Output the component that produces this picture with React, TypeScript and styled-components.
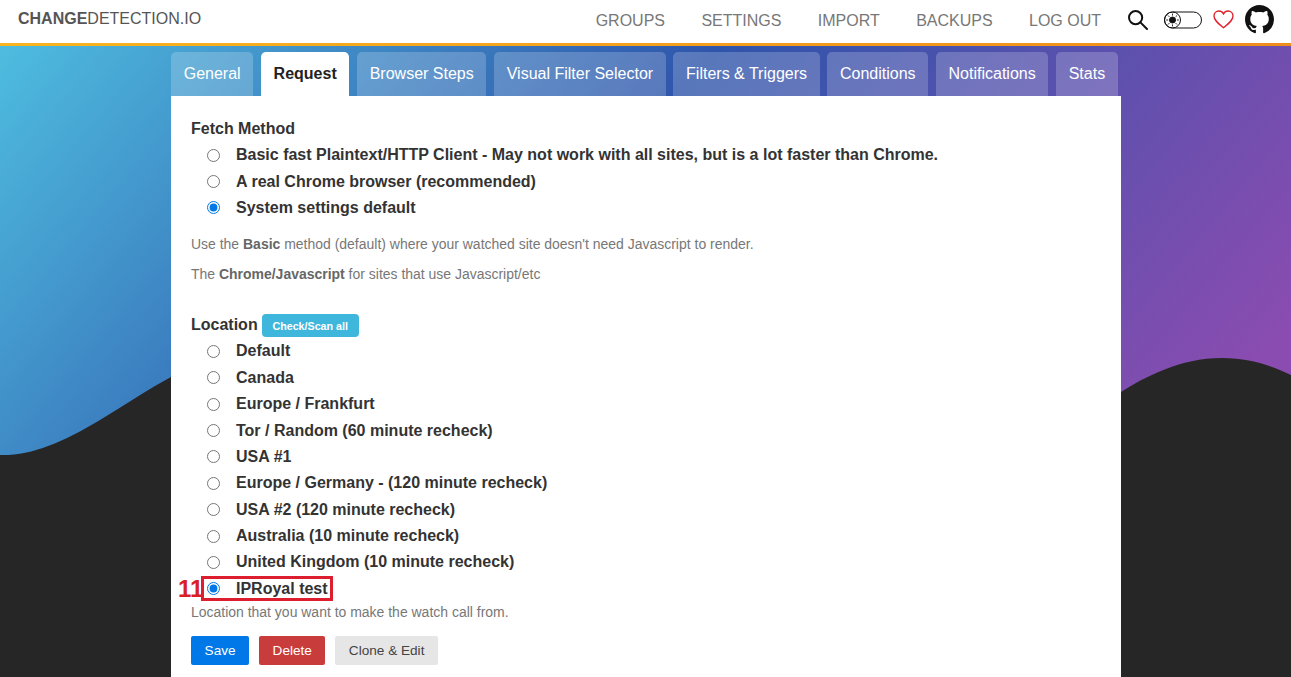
import React from "react";
import styled, { createGlobalStyle } from "styled-components";

const Global = createGlobalStyle`
  html, body { margin: 0; padding: 0; height: 677px; overflow: hidden; background: #262626; }
  body { font-family: "Liberation Sans", Arial, sans-serif; color: #333; }
  * { box-sizing: border-box; }
`;
const Page = styled.div`position: relative; width: 1291px; height: 677px; overflow: hidden;
  background: linear-gradient(130deg, #50c2e2 0%, #2f55ab 41%, #8a4cb0 84%);`;
const Wave = styled.svg`position: absolute; left: 0; top: 0; width: 1291px; height: 677px; display: block;`;
const Header = styled.header`position: relative; height: 46px; background: #fff; border-bottom: 3px solid; border-image: linear-gradient(90deg, #f7b51f, #f08c1c) 1;
  display: flex; align-items: center; padding: 0 17px 4px 18px;`;
const Brand = styled.div`font-size: 16px; color: #555; flex: 1; margin-top: -2px; b { font-weight: 700; }`;
const Nav = styled.nav`display: flex; gap: 36.4px; margin: 2px 27px 0 0;`;
const NavLink = styled.a`font-size: 16px; color: #777; text-transform: uppercase;`;
const Icons = styled.div`display: flex; align-items: center;`;
const Main = styled.main`position: relative; width: 950px; margin-left: 171px;`;
const Tabs = styled.div`display: flex; padding-top: 6px; gap: 7.6px;`;
const Tab = styled.div<{ $active?: boolean }>`
  height: 44px; padding: 0 12.7px; display: flex; align-items: center; border-radius: 5px 5px 0 0; white-space: nowrap;
  font-size: 16px; font-weight: ${p => (p.$active ? 700 : 400)};
  color: ${p => (p.$active ? "#222" : "#fff")};
  background: ${p => (p.$active ? "#fff" : "rgba(255,255,255,0.2)")};
`;
const Panel = styled.section`background: #fff; height: 581px; padding: 23px 20px 0;`;
const Heading = styled.div<{ $spaced?: boolean }>`font-size: 16px; font-weight: 700; line-height: 20px; color: #333; display: flex; align-items: center; gap: 4px; margin-top: ${p => (p.$spaced ? "28px" : "0")};`;
const RadioList = styled.div<{ $tight?: boolean }>`margin-top: ${p => (p.$tight ? "1px" : "3px")};`;
const RadioRow = styled.label`display: flex; align-items: center; height: 26.4px; padding-left: 16px; font-size: 16px; font-weight: 700; color: #333;`;
const Radio = styled.input.attrs({ type: "radio" })`width: 13px; height: 13px; margin: 0 16px 0 0; accent-color: #0078e7; flex: none;`;
const Hint = styled.p<{ $gap?: number }>`margin: ${p => p.$gap ?? 0}px 0 0; font-size: 13.98px; line-height: 20px; color: #777; b { color: #666; }`;
const ScanButton = styled.span`background: #3fb6dc; color: #fff; font-size: 10.7px; font-weight: 700; height: 23px; padding: 0 10.8px; border-radius: 4px; display: inline-flex; align-items: center; margin-top: 2px;`;
const Highlighted = styled.div`position: relative;`;
const Outline = styled.div`position: absolute; left: 10px; top: 0; width: 132px; height: 25px; border: 3px solid #dc1e2e; pointer-events: none;`;
const Step = styled.span`position: absolute; left: -13px; top: 0; font-size: 24px; line-height: 26px; font-weight: 700; color: #d91e26;`;
const Actions = styled.div`display: flex; gap: 9.8px; margin-top: 14px;`;
const Btn = styled.span<{ $bg: string; $fg: string }>`height: 29px; padding: 0 13.6px; font-size: 13.6px; border-radius: 2px; display: inline-flex; align-items: center; background: ${p => p.$bg}; color: ${p => p.$fg};`;

const tabs = ["General", "Request", "Browser Steps", "Visual Filter Selector", "Filters & Triggers", "Conditions", "Notifications", "Stats"];
const fetchMethods = ["Basic fast Plaintext/HTTP Client - May not work with all sites, but is a lot faster than Chrome.", "A real Chrome browser (recommended)", "System settings default"];
const locations = ["Default", "Canada", "Europe / Frankfurt", "Tor / Random (60 minute recheck)", "USA #1", "Europe / Germany - (120 minute recheck)", "USA #2 (120 minute recheck)", "Australia (10 minute recheck)", "United Kingdom (10 minute recheck)"];

export default function App() {
  return (
    <Page>
      <Global />
      <Wave viewBox="0 0 1291 677" aria-hidden="true">
        <path fill="#262626" d="M0 455 C30 456 62 443 100 420 C125 405 150 388 171 377 L1121 392 C1145 377 1180 358 1222 358 C1250 358 1272 366 1291 375 L1291 677 L0 677 Z" />
      </Wave>
      <Header>
        <Brand><b>CHANGE</b>DETECTION.IO</Brand>
        <Nav>
          {["Groups", "Settings", "Import", "Backups", "Log out"].map(n => <NavLink key={n}>{n}</NavLink>)}
        </Nav>
        <Icons>
          <svg width="20" height="20" viewBox="0 0 20 20" fill="none" stroke="#111" strokeWidth="2" style={{ marginRight: 16 }}>
            <circle cx="7.6" cy="7.6" r="6.6" /><path d="M12.4 12.4 L19 19" strokeLinecap="round" />
          </svg>
          <svg width="38" height="18" viewBox="0 0 38 18" fill="none" stroke="#111" style={{ marginRight: 11 }}>
            <rect x="0.5" y="1" width="37" height="16" rx="8" />
            <circle cx="8.5" cy="9" r="8" />
            <circle cx="8.5" cy="9" r="3" fill="#111" />
            <path d="M8.5 2.6V4.6M8.5 13.4V15.4M2.1 9H4.1M12.9 9H14.9M4 4.5L5.4 5.9M11.6 12.1L13 13.5M4 13.5L5.4 12.1M11.6 5.9L13 4.5" strokeWidth="0.9" />
          </svg>
          <svg width="21" height="19" viewBox="0 0 24 22" fill="none" stroke="#e0202c" strokeWidth="1.6" style={{ marginRight: 11 }}>
            <path d="M12 20.5 C5 15 1 11.5 1 7 C1 3.6 3.6 1.2 6.6 1.2 C8.8 1.2 10.9 2.4 12 4.4 C13.1 2.4 15.2 1.2 17.4 1.2 C20.4 1.2 23 3.6 23 7 C23 11.5 19 15 12 20.5 Z" />
          </svg>
          <svg width="29" height="29" viewBox="0 0 16 16" fill="#111">
            <path d="M8 0C3.58 0 0 3.58 0 8c0 3.54 2.29 6.53 5.47 7.59.4.07.55-.17.55-.38 0-.19-.01-.82-.01-1.49-2.01.37-2.53-.49-2.69-.94-.09-.23-.48-.94-.82-1.13-.28-.15-.68-.52-.01-.53.63-.01 1.08.58 1.23.82.72 1.21 1.87.87 2.33.66.07-.52.28-.87.51-1.07-1.78-.2-3.64-.89-3.64-3.95 0-.87.31-1.59.82-2.15-.08-.2-.36-1.02.08-2.12 0 0 .67-.21 2.2.82.64-.18 1.32-.27 2-.27s1.36.09 2 .27c1.53-1.04 2.2-.82 2.2-.82.44 1.1.16 1.92.08 2.12.51.56.82 1.27.82 2.15 0 3.07-1.87 3.75-3.65 3.95.29.25.54.73.54 1.48 0 1.07-.01 1.93-.01 2.2 0 .21.15.46.55.38A8.01 8.01 0 0 0 16 8c0-4.42-3.58-8-8-8z" />
          </svg>
        </Icons>
      </Header>
      <Main>
        <Tabs>
          {tabs.map(t => <Tab key={t} $active={t === "Request"}>{t}</Tab>)}
        </Tabs>
        <Panel>
          <Heading>Fetch Method</Heading>
          <RadioList>
            {fetchMethods.map((m, i) => (
              <RadioRow key={m}><Radio name="fetch" defaultChecked={i === 2} />{m}</RadioRow>
            ))}
          </RadioList>
          <Hint $gap={13}>Use the <b>Basic</b> method (default) where your watched site doesn't need Javascript to render.</Hint>
          <Hint $gap={10}>The <b>Chrome/Javascript</b> for sites that use Javascript/etc</Hint>
          <Heading $spaced>Location<ScanButton>Check/Scan all</ScanButton></Heading>
          <RadioList $tight>
            {locations.map(m => (
              <RadioRow key={m}><Radio name="loc" />{m}</RadioRow>
            ))}
            <Highlighted>
              <Step>11</Step>
              <Outline />
              <RadioRow><Radio name="loc" defaultChecked />IPRoyal test</RadioRow>
            </Highlighted>
          </RadioList>
          <Hint>Location that you want to make the watch call from.</Hint>
          <Actions>
            <Btn $bg="#0078e7" $fg="#fff">Save</Btn>
            <Btn $bg="#c83c3c" $fg="#fff">Delete</Btn>
            <Btn $bg="#e6e6e6" $fg="#444">Clone &amp; Edit</Btn>
          </Actions>
        </Panel>
      </Main>
    </Page>
  );
}
